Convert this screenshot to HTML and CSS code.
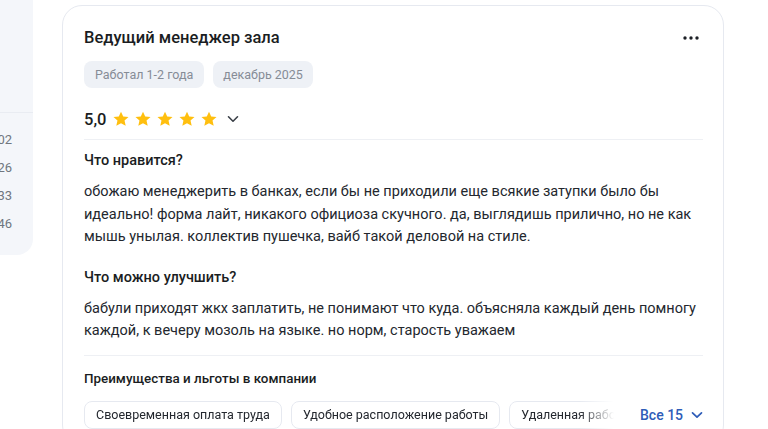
FILE: index.html
```html
<!DOCTYPE html>
<html lang="ru">
<head>
<meta charset="utf-8">
<link rel="stylesheet" href="styles.css">
</head>
<body>
<div class="page">
  <aside class="side">
    <div class="side-top"></div>
    <ul class="side-list">
      <li>1 702</li>
      <li>1 926</li>
      <li>2 133</li>
      <li>2 346</li>
    </ul>
  </aside>
  <article class="card">
    <div class="head">
      <h2 class="title">Ведущий менеджер зала</h2>
      <button class="more" aria-label="Ещё">
        <svg width="16" height="4" viewBox="0 0 16 4"><circle cx="2" cy="2" r="1.7"/><circle cx="8" cy="2" r="1.7"/><circle cx="14" cy="2" r="1.7"/></svg>
      </button>
    </div>
    <div class="tags">
      <span class="tag">Работал 1-2 года</span>
      <span class="tag">декабрь 2025</span>
    </div>
    <div class="rating">
      <span class="score">5,0</span>
      <span class="stars">
        <svg viewBox="0 0 24 24"><path d="M12 2.2l2.95 6.5 7.05.7-5.3 4.75 1.55 6.95L12 17.5l-6.25 3.6 1.55-6.95L2 9.4l7.05-.7z"/></svg>
        <svg viewBox="0 0 24 24"><path d="M12 2.2l2.95 6.5 7.05.7-5.3 4.75 1.55 6.95L12 17.5l-6.25 3.6 1.55-6.95L2 9.4l7.05-.7z"/></svg>
        <svg viewBox="0 0 24 24"><path d="M12 2.2l2.95 6.5 7.05.7-5.3 4.75 1.55 6.95L12 17.5l-6.25 3.6 1.55-6.95L2 9.4l7.05-.7z"/></svg>
        <svg viewBox="0 0 24 24"><path d="M12 2.2l2.95 6.5 7.05.7-5.3 4.75 1.55 6.95L12 17.5l-6.25 3.6 1.55-6.95L2 9.4l7.05-.7z"/></svg>
        <svg viewBox="0 0 24 24"><path d="M12 2.2l2.95 6.5 7.05.7-5.3 4.75 1.55 6.95L12 17.5l-6.25 3.6 1.55-6.95L2 9.4l7.05-.7z"/></svg>
      </span>
      <svg class="chev" width="12" height="8" viewBox="0 0 12 8"><path d="M1.5 1.8L6 6.2l4.5-4.4" fill="none" stroke="#3a3f47" stroke-width="1.6" stroke-linecap="round" stroke-linejoin="round"/></svg>
    </div>
    <div class="sep"></div>
    <section class="block">
      <h3 class="q">Что нравится?</h3>
      <p class="a">обожаю менеджерить в банках, если бы не приходили еще всякие затупки было бы идеально! форма лайт, никакого официоза скучного. да, выглядишь прилично, но не как мышь унылая. коллектив пушечка, вайб такой деловой на стиле.</p>
    </section>
    <section class="block">
      <h3 class="q">Что можно улучшить?</h3>
      <p class="a">бабули приходят жкх заплатить, не понимают что куда. объясняла каждый день помногу каждой, к вечеру мозоль на языке. но норм, старость уважаем</p>
    </section>
    <div class="sep sep2"></div>
    <h4 class="perks-title">Преимущества и льготы в компании</h4>
    <div class="perks">
      <div class="perk-list">
        <span class="perk">Своевременная оплата труда</span>
        <span class="perk">Удобное расположение работы</span>
        <span class="perk">Удаленная работа</span>
      </div>
      <a class="all" href="#"><span>Все 15</span>
        <svg width="12" height="8" viewBox="0 0 12 8"><path d="M1.5 1.8L6 6.2l4.5-4.4" fill="none" stroke="currentColor" stroke-width="1.7" stroke-linecap="round" stroke-linejoin="round"/></svg>
      </a>
    </div>
  </article>
</div>
</body>
</html>
```

FILE: styles.css
```css
* { box-sizing: border-box; }
html, body { margin: 0; padding: 0; background: #fff; }
body {
  font-family: Roboto, "Liberation Sans", Arial, sans-serif;
  color: #1f2329;
  width: 768px;
  height: 429px;
  overflow: hidden;
}
.page {
  display: flex;
  align-items: flex-start;
  gap: 29px;
}
.side {
  width: 33px;
  height: 255px;
  background: #f4f6fa;
  border-bottom-right-radius: 16px;
  flex: none;
  overflow: hidden;
  padding-right: 21px;
}
.side-top {
  height: 113px;
  margin-right: -21px;
  border-bottom: 1px solid #e9ecf2;
}
.side-list {
  list-style: none;
  margin: 0;
  padding: 13px 0 0;
  display: flex;
  flex-direction: column;
  align-items: flex-end;
}
.side-list li {
  font-size: 13px;
  line-height: 28px;
  color: #70767f;
  white-space: nowrap;
}
.card {
  margin-top: 5px;
  width: 662px;
  height: 440px;
  border: 1px solid #e6e9f0;
  border-radius: 20px;
  padding: 20px 20px 0 21px;
  flex: none;
}
.head {
  display: flex;
  justify-content: space-between;
  align-items: center;
  height: 24px;
}
.title {
  margin: 0;
  font-size: 16.5px;
  font-weight: 500;
  line-height: 24px;
  color: #1a1d22;
}
.more {
  border: 0;
  background: none;
  padding: 0;
  margin-right: 4px;
  display: flex;
  fill: #1d2026;
}
.tags {
  display: flex;
  gap: 9px;
  margin-top: 11px;
}
.tag {
  background: #eef1f6;
  color: #868c96;
  font-size: 12.5px;
  line-height: 27px;
  height: 27px;
  padding: 0 11px;
  border-radius: 8px;
}
.tag + .tag { padding: 0 10px; }
.rating {
  display: flex;
  align-items: center;
  height: 24px;
  margin-top: 19px;
}
.score {
  font-size: 16.5px;
  font-weight: 500;
  margin-right: 6px;
  color: #1a1d22;
}
.stars {
  display: flex;
  gap: 4px;
}
.stars svg {
  width: 18px;
  height: 18px;
  fill: #ffbf0f;
}
.chev { margin-left: 9px; }
.sep {
  height: 1px;
  background: #eef0f4;
  margin-top: 8px;
}
.block { margin-top: 11px; }
.block + .block { margin-top: 19px; }
.q {
  margin: 0;
  font-size: 14.5px;
  font-weight: 500;
  line-height: 20px;
  color: #1a1d22;
}
.a {
  margin: 10px 0 0;
  font-size: 14.5px;
  line-height: 22.5px;
  color: #23272e;
}
.sep2 { margin-top: 12px; }
.perks-title {
  margin: 13px 0 0;
  font-size: 13.4px;
  font-weight: 500;
  line-height: 20px;
  color: #1a1d22;
}
.perks {
  display: flex;
  align-items: center;
  margin-top: 12px;
}
.perk-list {
  display: flex;
  gap: 9px;
  width: 540px;
  overflow: hidden;
  flex: none;
  -webkit-mask-image: linear-gradient(to right, #000 495px, transparent 530px);
  mask-image: linear-gradient(to right, #000 495px, transparent 530px);
}
.perk {
  flex: none;
  height: 28px;
  line-height: 26px;
  font-size: 12.5px;
  padding: 0 11px;
  border: 1px solid #e6e9f0;
  border-radius: 8px;
  color: #23272e;
  white-space: nowrap;
}
.all {
  margin-left: 16px;
  flex: none;
  white-space: nowrap;
  display: flex;
  align-items: center;
  gap: 8px;
  color: #2e5cb8;
  font-size: 14px;
  font-weight: 500;
  text-decoration: none;
}
```
